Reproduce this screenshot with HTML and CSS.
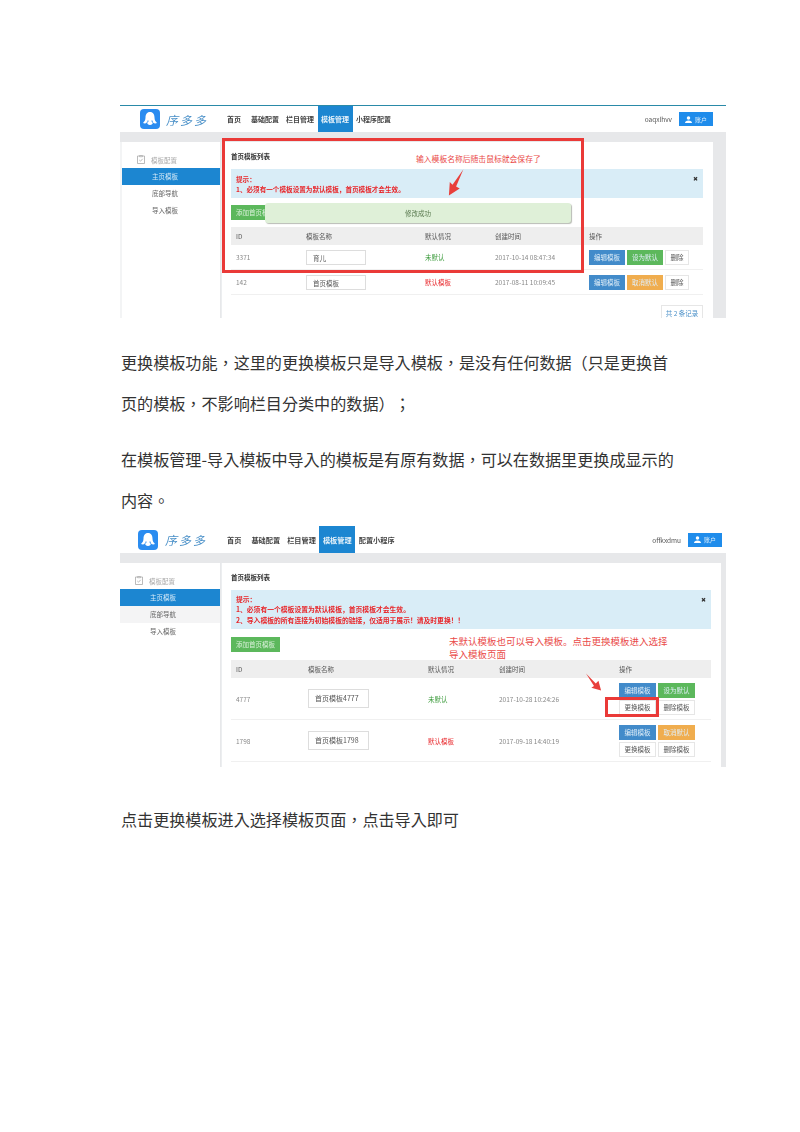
FILE: index.html
```html
<!DOCTYPE html>
<html lang="zh-CN">
<head>
    <meta charset="UTF-8">
    <title>更换模板功能</title>
    <link rel="stylesheet" href="styles.css">
</head>
<body>

<!-- 列表页：修改模板名称 -->
<div class="shot shot-a">
    <div class="blurred">
        <div class="topbar">
            <svg class="logo" viewBox="0 0 20 20"><rect width="20" height="20" rx="4" fill="#2a8cf0"/><path d="M10 3C6.800 3 5.500 5.500 5.500 8.500c0 2.500-1 4-2.500 5.500 1.500.8 3 .5 4-.5.3 1.500 1.200 2.500 3 2.500s2.700-1 3-2.500c1 1 2.500 1.300 4 .5-1.500-1.500-2.500-3-2.500-5.500C14.500 5.500 13.200 3 10 3z" fill="#fff"/><path d="M8 11.500c0 1.200-.2 1.800-1 2.200M12 11.500c0 1.200.2 1.800 1 2.200" fill="none" stroke="#2a8cf0"/></svg>
            <span class="brand">序多多</span>
            <div class="nav">
                <a>首页</a>
                <a>基础配置</a>
                <a>栏目管理</a>
                <a class="on">模板管理</a>
                <a>小程序配置</a>
            </div>
            <span class="user">oaqxlhvv</span>
            <span class="account"><svg class="person" viewBox="0 0 8 8"><circle cx="4" cy="2.200" r="2"/><path d="M0 8c0-2 1.500-3 4-3s4 1 4 3z"/></svg>账户</span>
        </div>
        <div class="band"></div>
        <div class="content">
            <div class="side">
                <div class="side-title"><svg class="clip" viewBox="0 0 8 9"><path d="M2.500 1H.5v7.500h7V1h-2M2.500.5h3v1.200h-3zM2.300 5l1.200 1.200 2.200-2.400" fill="none" stroke="#aaa" stroke-width=".8"/></svg>模板配置</div>
                <div class="side-item on">主页模板</div>
                <div class="side-item">底部导航</div>
                <div class="side-item">导入模板</div>
            </div>
            <div class="main">
                <div class="main-title">首页模板列表</div>
                <div class="tip">
                    <b>提示：</b>
                    <b>1、必须有一个模板设置为默认模板，首页模板才会生效。</b>
                    <i class="close">✖</i>
                </div>
                <div class="add">添加首页模板</div>
                <table>
                    <thead>
                        <tr><th class="c-id">ID</th><th class="c-name">模板名称</th><th class="c-def">默认情况</th><th class="c-time">创建时间</th><th>操作</th></tr>
                    </thead>
                    <tbody>
                        <tr>
                            <td>3371</td><td><span class="name-box">育儿</span></td><td class="off">未默认</td><td>2017-10-14 08:47:34</td>
                            <td><div class="ops"><span class="btn blue">编辑模板</span><span class="btn green">设为默认</span><span class="btn plain short">删除</span></div></td>
                        </tr>
                        <tr>
                            <td>142</td><td><span class="name-box">首页模板</span></td><td class="def">默认模板</td><td>2017-08-11 10:09:45</td>
                            <td><div class="ops"><span class="btn blue">编辑模板</span><span class="btn orange">取消默认</span><span class="btn plain short">删除</span></div></td>
                        </tr>
                    </tbody>
                </table>
                <div class="pager">共 2 条记录</div>
            </div>
        </div>
        <div class="toast">修改成功</div>
    </div>
    <div class="mark-box mark-a"></div>
    <div class="note note-a">输入模板名称后随击鼠标就会保存了</div>
    <svg class="arrow arrow-a" viewBox="0 0 20 30"><path d="M17 0 9 19l4 2L1 29l1-15 3 3z" fill="#e8403c"/></svg>
</div>

<p>更换模板功能，这里的更换模板只是导入模板，是没有任何数据（只是更换首页的模板，不影响栏目分类中的数据）；</p>
<p>在模板管理-导入模板中导入的模板是有原有数据，可以在数据里更换成显示的内容。</p>

<!-- 列表页：更换模板入口 -->
<div class="shot shot-b">
    <div class="blurred">
        <div class="topbar">
            <svg class="logo" viewBox="0 0 20 20"><rect width="20" height="20" rx="4" fill="#2a8cf0"/><path d="M10 3C6.800 3 5.500 5.500 5.500 8.500c0 2.500-1 4-2.500 5.500 1.500.8 3 .5 4-.5.3 1.500 1.200 2.500 3 2.500s2.700-1 3-2.500c1 1 2.500 1.300 4 .5-1.500-1.500-2.500-3-2.500-5.500C14.500 5.500 13.200 3 10 3z" fill="#fff"/><path d="M8 11.500c0 1.200-.2 1.800-1 2.200M12 11.500c0 1.200.2 1.800 1 2.200" fill="none" stroke="#2a8cf0"/></svg>
            <span class="brand">序多多</span>
            <div class="nav">
                <a>首页</a>
                <a>基础配置</a>
                <a>栏目管理</a>
                <a class="on">模板管理</a>
                <a>配置小程序</a>
            </div>
            <span class="user">offkxdmu</span>
            <span class="account"><svg class="person" viewBox="0 0 8 8"><circle cx="4" cy="2.200" r="2"/><path d="M0 8c0-2 1.500-3 4-3s4 1 4 3z"/></svg>账户</span>
        </div>
        <div class="band"></div>
        <div class="content">
            <div class="side">
                <div class="side-title"><svg class="clip" viewBox="0 0 8 9"><path d="M2.500 1H.5v7.500h7V1h-2M2.500.5h3v1.200h-3zM2.300 5l1.200 1.200 2.200-2.400" fill="none" stroke="#aaa" stroke-width=".8"/></svg>模板配置</div>
                <div class="side-item on">主页模板</div>
                <div class="side-item alt">底部导航</div>
                <div class="side-item">导入模板</div>
            </div>
            <div class="main">
                <div class="main-title">首页模板列表</div>
                <div class="tip">
                    <b>提示：</b>
                    <b>1、必须有一个模板设置为默认模板，首页模板才会生效。</b>
                    <b>2、导入模板的所有连接为初始模板的链接，仅适用于展示！请及时更换！！</b>
                    <i class="close">✖</i>
                </div>
                <div class="add">添加首页模板</div>
                <table>
                    <thead>
                        <tr><th class="c-id">ID</th><th class="c-name">模板名称</th><th class="c-def">默认情况</th><th class="c-time">创建时间</th><th>操作</th></tr>
                    </thead>
                    <tbody>
                        <tr>
                            <td>4777</td><td><span class="name-box">首页模板4777</span></td><td class="off">未默认</td><td>2017-10-28 10:24:26</td>
                            <td><div class="ops"><span class="btn blue">编辑模板</span><span class="btn green">设为默认</span><span class="btn plain">更换模板</span><span class="btn plain">删除模板</span></div></td>
                        </tr>
                        <tr>
                            <td>1798</td><td><span class="name-box">首页模板1798</span></td><td class="def">默认模板</td><td>2017-09-18 14:40:19</td>
                            <td><div class="ops"><span class="btn blue">编辑模板</span><span class="btn orange">取消默认</span><span class="btn plain">更换模板</span><span class="btn plain">删除模板</span></div></td>
                        </tr>
                    </tbody>
                </table>
            </div>
        </div>
    </div>
    <div class="mark-box mark-b"></div>
    <div class="note note-b">未默认模板也可以导入模板。点击更换模板进入选择<br>导入模板页面</div>
    <svg class="arrow arrow-b" viewBox="0 0 18 20"><path d="M0 0 11 11l3-3 3 11-11-3 3-2z" fill="#e8403c"/></svg>
</div>

<p class="last">点击更换模板进入选择模板页面，点击导入即可</p>

</body>
</html>
```

FILE: styles.css
```css
body {
    margin: 0;
    padding: 105px 74px 0 120px;
    background-color: #fff;
    color: #333;
    font-family: "Noto Sans CJK SC", "Liberation Sans", sans-serif;
    text-spacing-trim: space-all;
}
p {
    margin: 15px 0 0;
    padding: 0 47px 0 1px;
    font-family: "Noto Sans CJK TC", "Noto Sans CJK SC", sans-serif;
    font-feature-settings: "locl" 0; /* 标点居中 */
    font-size: 16.1px;
    line-height: 41px;
    color: #333;
}
.shot + p {
    margin-top: 24px;
}
p.last {
    margin-top: 32px;
}

/* 截图区域 */
.shot {
    position: relative;
    overflow: hidden;
    font-size: 6.5px;
    color: #555;
}
.shot-a {
    height: 213px;
    border-top: 1px solid #2a8aa8;
    box-sizing: border-box;
}
.shot-b {
    height: 241px;
    margin-top: 5px;
}
.blurred {
    filter: blur(0.5px);
}

/* 顶部导航 */
.topbar {
    display: flex;
    align-items: center;
    height: 26px;
}
.shot-b .topbar {
    height: 27px;
}
.logo {
    flex: none;
    width: 20px;
    height: 20px;
    margin-left: 20px;
}
.shot-b .logo {
    margin-left: 18px;
}
.brand {
    width: 61px;
    margin-left: 6px;
    font-size: 12px;
    font-style: italic;
    letter-spacing: 2px;
    color: #4a90c8;
}
.shot-b .brand {
    margin-left: 7px;
    width: 62px;
}
.nav {
    display: flex;
    align-self: stretch;
    font-weight: 700;
    font-size: 7px;
    color: #444;
}
.shot-b .nav {
    font-size: 7.2px;
}
.nav a {
    display: flex;
    align-items: center;
    padding: 0 3.5px;
}
.nav a:first-child {
    padding-left: 0;
    margin-right: 3px;
}
.nav a.on {
    background-color: #1c86d1;
    color: #e6f2fa;
}
.user {
    margin-left: auto;
    color: #555;
}
.account {
    display: flex;
    align-items: center;
    justify-content: center;
    gap: 3px;
    width: 34px;
    height: 14px;
    margin: 0 13px 0 7px;
    background-color: #1f8ceb;
    color: #d8ecfb;
    font-size: 6px;
}
.shot-b .account {
    margin-right: 4px;
}
.person {
    width: 7px;
    height: 7px;
    fill: #fff;
}
.band {
    height: 10px;
    background-color: #e7e8ea;
}

/* 内容区 */
.content {
    display: flex;
    height: 204px;
    background-color: #e7e8ea;
}
.side {
    flex: none;
    width: 98px;
    border-left: 2px solid #f3f4f5;
    background-color: #fff;
}
.shot-b .side {
    width: 100px;
    border-left: 0;
}
.side-title {
    display: flex;
    align-items: center;
    height: 17px;
    margin-top: 9px;
    padding-left: 15px;
    color: #aaa;
}
.clip {
    width: 8px;
    height: 9px;
    margin-right: 6px;
}
.side-item {
    height: 17px;
    line-height: 17px;
    padding-left: 30px;
    color: #666;
}
.side-item.on {
    background-color: #1c86d1;
    color: #d5eaf8;
}
.side-item.alt {
    background-color: #f4f4f5;
}
.main {
    flex: none;
    width: 472px;
    margin-left: 1px;
    padding: 0 10px 0 9px;
    background-color: #fff;
    border-left: 1px solid #eceef0;
}
.shot-b .main {
    width: 480px;
    margin-right: 4px;
}
.main-title {
    height: 27px;
    line-height: 28px;
    font-weight: 700;
    color: #333;
}
.tip {
    position: relative;
    display: flex;
    flex-direction: column;
    justify-content: center;
    height: 29px;
    padding-left: 5px;
    background-color: #d9edf7;
    color: #e8262a;
    font-size: 6.6px;
    line-height: 10px;
}
.shot-b .tip {
    height: 39px;
    font-size: 6.8px;
    line-height: 10.5px;
}
.close {
    position: absolute;
    top: 5px;
    right: 5px;
    font-style: normal;
    font-size: 6px;
    color: #333;
}
.add {
    width: 49px;
    height: 15px;
    line-height: 15px;
    margin: 7px 0;
    text-align: center;
    background-color: #5cb85c;
    color: #d9f0d9;
}
.shot-b .add {
    margin: 8px 0;
}

/* 模板表格 */
table {
    width: 100%;
    border-collapse: collapse;
    table-layout: fixed;
}
th {
    height: 18px;
    padding: 0 0 0 5px;
    background-color: #eeeeee;
    text-align: left;
    font-weight: 400;
    color: #555;
}
td {
    height: 24px;
    padding: 0 0 0 5px;
    border-bottom: 1px solid #f0f0f0;
    color: #888;
}
.shot-b td {
    height: 41px;
}
.c-id { width: 65px; }
.c-name { width: 114px; }
.c-def { width: 65px; }
.c-time { width: 89px; }
.shot-b .c-id { width: 67px; }
.shot-b .c-name { width: 115px; }
.shot-b .c-def { width: 66px; }
.shot-b .c-time { width: 115px; }
.name-box {
    display: block;
    width: 60px;
    height: 15px;
    line-height: 14px;
    padding-left: 6px;
    box-sizing: border-box;
    border: 1px solid #ddd;
    background-color: #fff;
    color: #555;
}
.shot-b .name-box {
    width: 61px;
    height: 19px;
    line-height: 17px;
    font-size: 7px;
}
.off { color: #3a9a3a; }
.def { color: #e8262a; }
.ops {
    display: flex;
    flex-wrap: wrap;
    gap: 2px;
}
.btn {
    width: 36px;
    height: 15px;
    line-height: 15px;
    text-align: center;
    color: #e0eef8;
}
.shot-b .btn {
    width: 37px;
}
.btn.blue { background-color: #428bca; }
.btn.green { background-color: #5cb85c; }
.btn.orange { background-color: #f0ad4e; }
.btn.plain {
    box-sizing: border-box;
    line-height: 13px;
    border: 1px solid #e6e6e6;
    background-color: #fff;
    color: #555;
}
.btn.short { width: 24px; }
.pager {
    width: 42px;
    height: 14px;
    line-height: 14px;
    margin: 10px 0 0 auto;
    text-align: center;
    border: 1px solid #e6e6e6;
    box-sizing: border-box;
    color: #4a90c8;
}

/* 浮层提示和批注 */
.toast {
    position: absolute;
    left: 145px;
    top: 97px;
    width: 306px;
    height: 20px;
    line-height: 20px;
    border-radius: 3px;
    box-shadow: 1px 1px 1px #b9bcb5;
    background-color: #dff0d8;
    text-align: center;
    color: #5a7a50;
}
.mark-box {
    position: absolute;
    border: 3px solid #ea3a38;
    box-sizing: border-box;
}
.mark-a {
    left: 102px;
    top: 32px;
    width: 362px;
    height: 135px;
}
.mark-b {
    left: 485px;
    top: 171px;
    width: 54px;
    height: 20px;
}
.note {
    position: absolute;
    font-size: 7.8px;
    line-height: 13px;
    color: #ea4a48;
}
.note-a {
    left: 296px;
    top: 46px;
}
.note-b {
    left: 329px;
    top: 109px;
    font-size: 9.5px;
}
.arrow {
    position: absolute;
}
.arrow-a {
    left: 328px;
    top: 63px;
    width: 18px;
    height: 28px;
}
.arrow-b {
    left: 466px;
    top: 147px;
    width: 16px;
    height: 19px;
}
```
